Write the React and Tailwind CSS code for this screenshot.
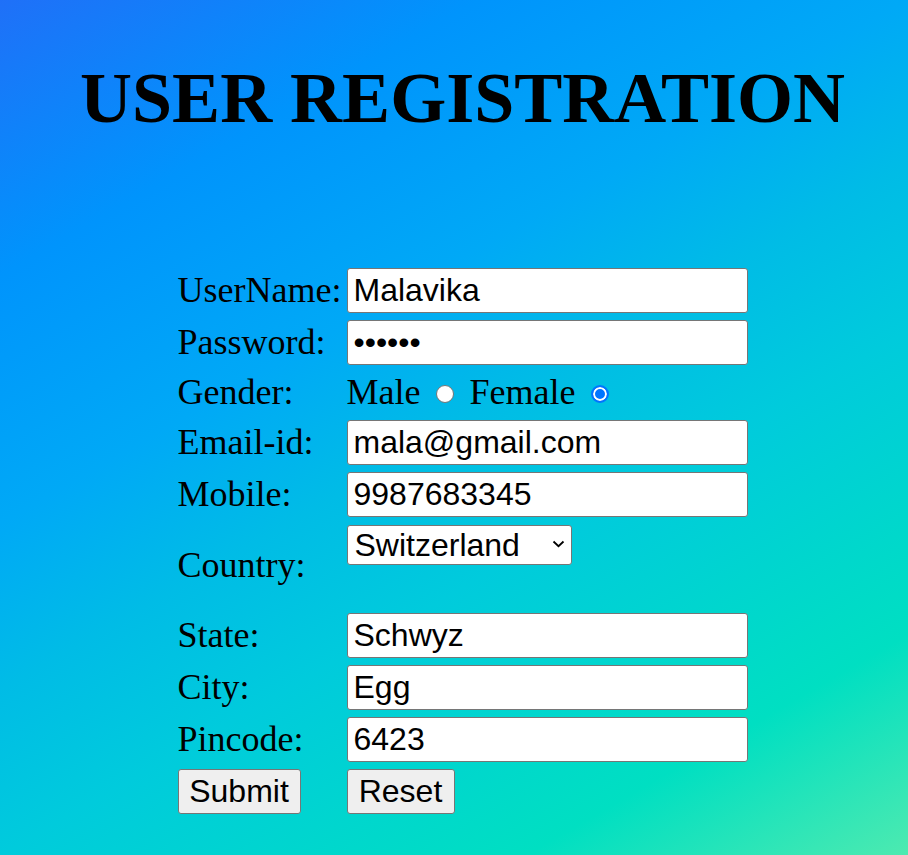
export default function App() {
  const rows = [
    { label: "UserName:", value: "Malavika" },
    { label: "Password:", value: "malala", type: "password" },
  ];
  const rows2 = [
    { label: "Email-id:", value: "mala@gmail.com" },
    { label: "Mobile:", value: "9987683345" },
  ];
  const rows3 = [
    { label: "State:", value: "Schwyz" },
    { label: "City:", value: "Egg" },
    { label: "Pincode:", value: "6423" },
  ];

  const input = (r) => (
    <div key={r.label} className="flex h-[45px] items-center">
      <span className="w-[169px] shrink-0">{r.label}</span>
      <input
        type={r.type || "text"}
        defaultValue={r.value}
        className="h-[45px] w-[401px] rounded-[3px] border border-[#767676] bg-white pl-[6px] font-['Liberation_Sans',Arial,sans-serif] text-[32px] text-black outline-none"
      />
    </div>
  );

  const radio =
    "mt-[3px] h-[18px] w-[18px] shrink-0 appearance-none rounded-full border border-[#767676] bg-white checked:border-2 checked:border-[#0075ff] checked:bg-[#0075ff] checked:shadow-[inset_0_0_0_2px_#fff]";

  return (
    <div className="h-screen w-full overflow-hidden bg-[linear-gradient(150deg,#1f70f8_0%,#0094fc_20%,#00a9f6_38%,#00bce6_50%,#00cbdc_62%,#00dfc2_84%,#4deab0_100%)] pl-[17px] font-['Liberation_Serif','Times_New_Roman',serif] text-black">
      <h1 className="pt-[58px] text-center text-[72px] font-bold leading-[80px]">
        USER REGISTRATION
      </h1>

      <div className="mt-[130px] flex justify-center">
        <form className="flex w-[570px] flex-col gap-[7px] text-[36px] leading-[41px]">
          {rows.map(input)}

          <div className="flex h-[41px] items-center">
            <span className="w-[169px] shrink-0">Gender:</span>
            <span>Male</span>
            <input type="radio" name="g" className={"ml-[16px] " + radio} />
            <span className="ml-[15px]">Female</span>
            <input type="radio" name="g" defaultChecked className={"ml-[16px] " + radio} />
          </div>

          {rows2.map(input)}

          <div className="flex h-[82px] items-center">
            <span className="w-[169px] shrink-0">Country:</span>
            <div className="relative self-start">
              <select
                defaultValue="Switzerland"
                className="h-[40px] w-[225px] appearance-none rounded-[3px] border border-[#767676] bg-white pl-[7px] font-['Liberation_Sans',Arial,sans-serif] text-[32px] leading-[38px] text-black outline-none"
              >
                <option>India</option>
                <option>Switzerland</option>
                <option>USA</option>
              </select>
              <svg
                className="pointer-events-none absolute right-[7px] top-[16px]"
                width="13"
                height="8"
                viewBox="0 0 13 8"
                fill="none"
              >
                <path d="M1.5 1.5 6.5 6.2l5-4.7" stroke="#000" strokeWidth="1.8" />
              </svg>
            </div>
          </div>

          {rows3.map(input)}

          <div className="flex h-[45px] items-center font-['Liberation_Sans',Arial,sans-serif] text-[32px]">
            <div className="w-[169px] shrink-0">
              <button type="button" className="h-[45px] w-[123px] rounded-[3px] border border-[#767676] bg-[#efefef] text-black">
                Submit
              </button>
            </div>
            <button type="button" className="h-[45px] w-[108px] rounded-[3px] border border-[#767676] bg-[#efefef] text-black">
              Reset
            </button>
          </div>
        </form>
      </div>
    </div>
  );
}
